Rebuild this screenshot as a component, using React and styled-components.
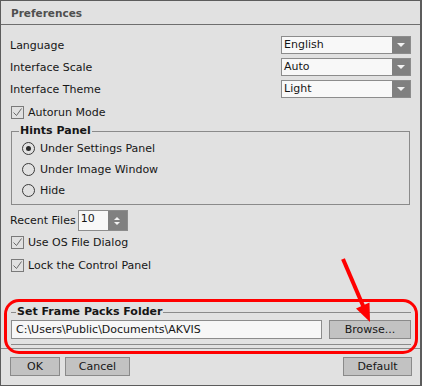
import React from 'react';
import styled, { createGlobalStyle } from 'styled-components';

const GlobalStyle = createGlobalStyle`
  html, body {
    margin: 0;
    padding: 0;
    background: #e1e1e1;
  }
  * {
    box-sizing: border-box;
  }
`;

const Window = styled.div`
  position: relative;
  width: 422px;
  height: 386px;
  display: flex;
  flex-direction: column;
  background: #e1e1e1;
  border: 1px solid #5c5c5c;
  border-right-width: 2px;
  font-family: 'DejaVu Sans', Verdana, sans-serif;
  font-size: 11px;
  color: #161616;
`;

const TitleBar = styled.div`
  height: 24px;
  padding-left: 10px;
  display: flex;
  align-items: center;
  border-bottom: 1px solid #6e6e6e;
  font-size: 10.5px;
  font-weight: bold;
  color: #4f4f4f;
`;

const Body = styled.div`
  flex: 1;
  display: flex;
  flex-direction: column;
  padding: 9px 9px 0 9px;
`;

const FieldRow = styled.div`
  height: ${(p) => p.$h || 22}px;
  display: flex;
  align-items: center;
  margin-top: ${(p) => p.$mt || 0}px;
`;

const Label = styled.span`
  white-space: nowrap;
`;

const SelectBox = styled.div`
  margin-left: auto;
  width: 130px;
  height: 18px;
  display: flex;
  border: 1px solid #8c8c8c;
  background: #f8f8f8;
`;

const SelectValue = styled.div`
  flex: 1;
  padding-left: 2px;
  line-height: 16px;
`;

const ArrowPart = styled.div`
  width: 18px;
  background: #808080;
  display: flex;
  align-items: center;
  justify-content: center;
`;

const DownTri = styled.span`
  width: 0;
  height: 0;
  border-left: 4px solid transparent;
  border-right: 4px solid transparent;
  border-top: 4px solid #f2f2f2;
`;

const UpTri = styled(DownTri)`
  border-top: none;
  border-bottom: 4px solid #f2f2f2;
`;

const CheckRow = styled.label`
  height: ${(p) => p.$h || 23}px;
  display: flex;
  align-items: center;
  gap: 4px;
  padding-left: 1px;
`;

const CheckBoxShape = styled.span`
  width: 13px;
  height: 13px;
  border: 1px solid #7a7a7a;
  display: flex;
  align-items: center;
  justify-content: center;
`;

const Group = styled.fieldset`
  margin: 0 1px;
  min-width: 0;
  padding: 0 0 3px 7px;
  border: 1px solid #8a8a8a;
`;

const FlatGroup = styled(Group)`
  border-left: none;
  border-right: none;
  padding: 0 0 5px 0;
  margin: auto 0 3px 1px;
`;

const Legend = styled.legend`
  padding: 0 1px;
  margin-left: ${(p) => p.$ml || 0}px;
  font-weight: bold;
  line-height: 14px;
`;

const RadioRow = styled.label`
  height: 21px;
  display: flex;
  align-items: center;
  gap: 5px;
  padding-left: 3px;
`;

const RadioCircle = styled.span`
  width: 13px;
  height: 13px;
  border-radius: 50%;
  border: 1px solid #3a3a3a;
  display: flex;
  align-items: center;
  justify-content: center;

  &::after {
    content: '';
    width: 5px;
    height: 5px;
    border-radius: 50%;
    background: ${(p) => (p.$on ? '#2a2a2a' : 'transparent')};
  }
`;

const SpinBox = styled.div`
  width: 50px;
  height: 21px;
  margin-left: 2px;
  display: flex;
  border: 1px solid #8c8c8c;
  background: #f8f8f8;
`;

const SpinButtons = styled(ArrowPart)`
  flex-direction: column;
  gap: 2px;
  width: 19px;

  span {
    border-left-width: 3px;
    border-right-width: 3px;
  }
  span:first-child {
    border-bottom-width: 3px;
  }
  span:last-child {
    border-top-width: 3px;
  }
`;

const PathRow = styled.div`
  display: flex;
  gap: 7px;
  margin-top: 1px;
`;

const PathInput = styled.div`
  flex: 1;
  height: 19px;
  border: 1px solid #8c8c8c;
  background: #f7f7f7;
  padding-left: 4px;
  line-height: 17px;
`;

const Button = styled.div`
  width: ${(p) => p.$w}px;
  height: 19px;
  border: 1px solid #8a8a8a;
  background: #c2c2c2;
  display: flex;
  align-items: center;
  justify-content: center;
  margin-left: ${(p) => (p.$push ? 'auto' : '0')};
`;

const Footer = styled.div`
  height: 37px;
  border-top: 1px solid #8a8a8a;
  display: flex;
  gap: 5px;
  padding: 8px 8px 0 9px;
`;

const Highlight = styled.div`
  position: absolute;
  left: 3px;
  top: 298px;
  width: 414px;
  height: 55px;
  border: 3px solid #f00;
  border-radius: 15px;
  pointer-events: none;
`;

const ArrowOverlay = styled.svg`
  position: absolute;
  left: 0;
  top: 0;
  pointer-events: none;
`;

function Select({ value }) {
  return (
    <SelectBox>
      <SelectValue>{value}</SelectValue>
      <ArrowPart>
        <DownTri />
      </ArrowPart>
    </SelectBox>
  );
}

function Check({ children, h }) {
  return (
    <CheckRow $h={h}>
      <CheckBoxShape>
        <svg width="11" height="11" viewBox="0 0 11 11">
          <path d="M1.5 5.5 L4.5 8.5 L9.5 1.5" fill="none" stroke="#6a6a6a" strokeWidth="1" />
        </svg>
      </CheckBoxShape>
      {children}
    </CheckRow>
  );
}

function Radio({ on, children }) {
  return (
    <RadioRow>
      <RadioCircle $on={on} />
      {children}
    </RadioRow>
  );
}

export default function App() {
  return (
    <>
      <GlobalStyle />
      <Window>
        <TitleBar>Preferences</TitleBar>
        <Body>
          <FieldRow>
            <Label>Language</Label>
            <Select value="English" />
          </FieldRow>
          <FieldRow>
            <Label>Interface Scale</Label>
            <Select value="Auto" />
          </FieldRow>
          <FieldRow>
            <Label>Interface Theme</Label>
            <Select value="Light" />
          </FieldRow>
          <Check h={24}>Autorun Mode</Check>

          <Group>
            <Legend>Hints Panel</Legend>
            <Radio on>Under Settings Panel</Radio>
            <Radio>Under Image Window</Radio>
            <Radio>Hide</Radio>
          </Group>

          <FieldRow $h={21} $mt={5}>
            <Label>Recent Files</Label>
            <SpinBox>
              <SelectValue>10</SelectValue>
              <SpinButtons>
                <UpTri />
                <DownTri />
              </SpinButtons>
            </SpinBox>
          </FieldRow>
          <Check>Use OS File Dialog</Check>
          <Check>Lock the Control Panel</Check>

          <FlatGroup>
            <Legend $ml={5}>Set Frame Packs Folder</Legend>
            <PathRow>
              <PathInput>C:\Users\Public\Documents\AKVIS</PathInput>
              <Button $w={82}>Browse...</Button>
            </PathRow>
          </FlatGroup>
        </Body>
        <Footer>
          <Button $w={50}>OK</Button>
          <Button $w={65}>Cancel</Button>
          <Button $w={69} $push>
            Default
          </Button>
        </Footer>

        <Highlight />
        <ArrowOverlay width="420" height="384" viewBox="1 1 420 384">
          <line x1="343" y1="259" x2="364" y2="308" stroke="#f00" strokeWidth="4" />
          <polygon points="370,322 369.5,302.5 356,308.5" fill="#f00" />
        </ArrowOverlay>
      </Window>
    </>
  );
}
